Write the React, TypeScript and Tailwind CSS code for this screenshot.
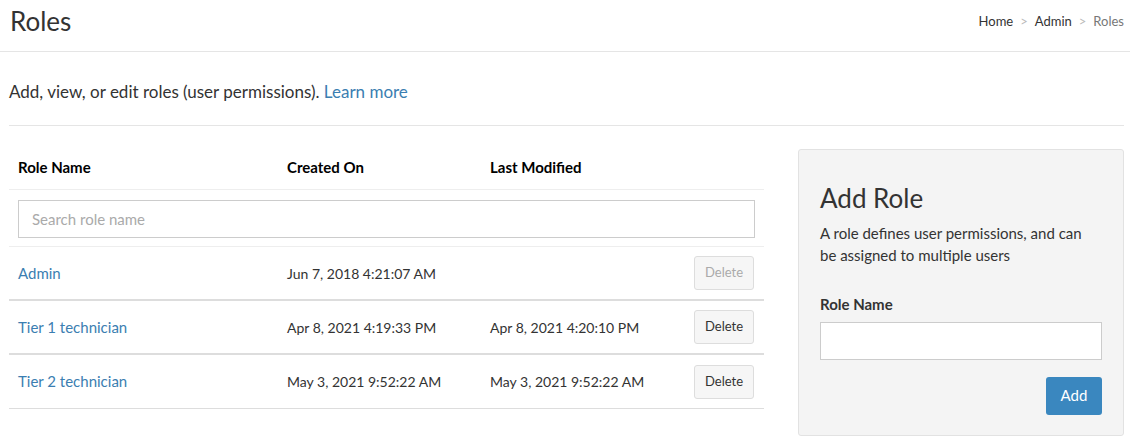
import React from 'react';

const ROLES = [
  { name: 'Admin', created: 'Jun 7, 2018 4:21:07 AM', modified: '', locked: true },
  { name: 'Tier 1 technician', created: 'Apr 8, 2021 4:19:33 PM', modified: 'Apr 8, 2021 4:20:10 PM', locked: false },
  { name: 'Tier 2 technician', created: 'May 3, 2021 9:52:22 AM', modified: 'May 3, 2021 9:52:22 AM', locked: false },
];

export default function App() {
  return (
    <div className="w-[1130px] h-[441px] bg-white text-[#333] font-['Lato','Open_Sans',sans-serif] overflow-hidden">
      <div className="h-[52px] flex items-center justify-between pl-[10px] pr-[6px] border-b border-[#e5e5e5]">
        <h1 className="text-[26px] leading-none text-[#333] -mt-[10px]">Roles</h1>
        <div className="flex items-center gap-[7px] text-[13px] -mt-[8px]">
          <span className="text-[#333]">Home</span>
          <span className="text-[#bbb]">&gt;</span>
          <span className="text-[#333]">Admin</span>
          <span className="text-[#bbb]">&gt;</span>
          <span className="text-[#777]">Roles</span>
        </div>
      </div>

      <div className="pl-[9px] pr-[6px]">
        <div className="h-[74px] flex items-center pt-[6px] border-b border-[#e5e5e5] text-[17px]">
          <p>
            Add, view, or edit roles (user permissions). <span className="text-[#3b7eb1]">Learn more</span>
          </p>
        </div>

        <div className="flex gap-[34px] pt-[20px]">
          <div className="w-[755px] shrink-0">
            <div className="grid grid-cols-[269px_203px_204px_1fr] h-[44px] items-center border-b border-[#eee] text-[15px] font-bold text-black">
              <div className="pl-[9px]">Role Name</div>
              <div className="pl-[9px]">Created On</div>
              <div className="pl-[9px]">Last Modified</div>
              <div />
            </div>
            <div className="h-[57px] pt-[10px] pl-[9px] pr-[9px] border-b border-[#eee]">
              <input
                className="w-full h-[38px] border border-[#ccc] px-[13px] text-[15px] placeholder:text-[#aaa] outline-none"
                placeholder="Search role name"
              />
            </div>
            {ROLES.map((r, i) => (
              <div
                key={r.name}
                className={`grid grid-cols-[269px_203px_204px_1fr] h-[54px] items-center text-[14px] ${
                  i === ROLES.length - 1 ? 'border-b border-[#ddd]' : 'border-b-2 border-[#ddd]'
                }`}
              >
                <div className="pl-[9px] text-[15px] text-[#3b7eb1]">{r.name}</div>
                <div className="pl-[9px]">{r.created}</div>
                <div className="pl-[9px]">{r.modified}</div>
                <div className="flex justify-end pr-[10px]">
                  <button
                    className={`w-[60px] h-[34px] rounded-[3px] border border-[#ddd] bg-[#f6f6f6] text-[13px] ${
                      r.locked ? 'text-[#aaa]' : 'text-[#333]'
                    }`}
                  >
                    Delete
                  </button>
                </div>
              </div>
            ))}
          </div>

          <div className="w-[326px] h-[287px] mt-[3px] bg-[#f4f4f4] border border-[#e2e2e2] rounded-[3px] px-[21px] pt-[31px]">
            <h2 className="text-[26px] leading-[34px] text-[#333]">Add Role</h2>
            <p className="mt-[7px] w-[272px] text-[15px] leading-[22px]">
              A role defines user permissions, and can be assigned to multiple users
            </p>
            <label className="block mt-[27px] text-[15px] font-bold">Role Name</label>
            <input className="mt-[6px] w-[282px] h-[38px] bg-white border border-[#ccc] outline-none" />
            <div className="flex justify-end w-[282px] mt-[17px]">
              <button className="w-[56px] h-[38px] rounded-[3px] bg-[#3a87bf] text-white text-[15px]">Add</button>
            </div>
          </div>
        </div>
      </div>
    </div>
  );
}
